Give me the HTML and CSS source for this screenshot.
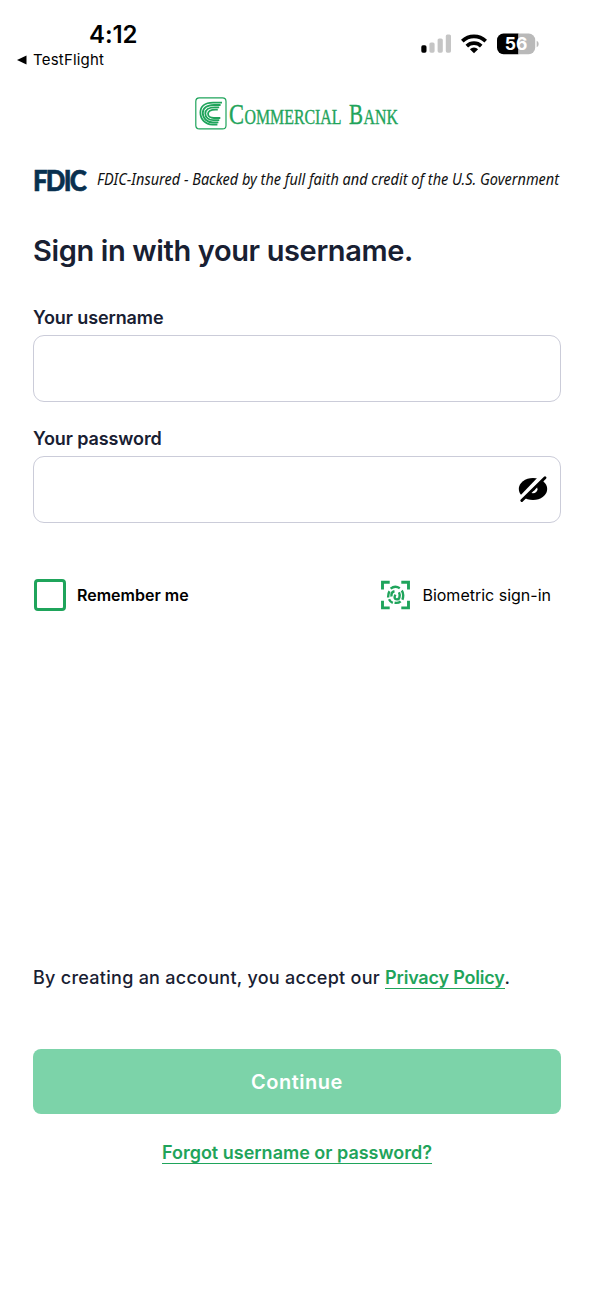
FILE: index.html
```html
<!DOCTYPE html>
<html lang="en">
<head>
  <meta charset="UTF-8" />
  <meta name="viewport" content="width=device-width, initial-scale=1.0"/>
  <title>Commercial Bank - Sign in</title>
  <link rel="stylesheet" href="styles.css">
</head>
<body>

  <header class="status-bar">
    <div class="status-left">
      <div class="time">4:12</div>
      <div class="back-app">
        <svg width="10" height="10" viewBox="0 0 10 10"><path d="M0 5L9.5 .5v9z" fill="#000"/></svg>
        <span>TestFlight</span>
      </div>
    </div>
    <svg class="status-icons" width="120" height="22" viewBox="420 33 120 22">
      <!-- signal -->
      <rect x="421.3" y="45.3" width="5.2" height="7.4" rx="1.6" fill="#000"/>
      <g fill="#c5c5c5">
        <rect x="429.4" y="42.4" width="5.2" height="10.3" rx="1.6"/>
        <rect x="437.6" y="38.4" width="5.2" height="14.3" rx="1.6"/>
        <rect x="445.8" y="34.4" width="5.2" height="18.3" rx="1.6"/>
      </g>
      <!-- wifi -->
      <g fill="none" stroke="#000" stroke-width="3.7">
        <path d="M462.3 41.2a16.8 16.8 0 0 1 23.4 0"/>
        <path d="M466.8 46.1a10.4 10.4 0 0 1 14.4 0"/>
      </g>
      <path d="M469.9 49.2a5.9 5.9 0 0 1 8.2 0L474 53.3z" fill="#000"/>
      <!-- battery -->
      <path d="M503.5 33.6h15v20.6h-15a6.5 6.5 0 0 1-6.5-6.5v-7.6a6.5 6.5 0 0 1 6.5-6.5z" fill="#000"/>
      <path d="M518.5 33.6h10.2a6.5 6.5 0 0 1 6.5 6.5v7.6a6.5 6.5 0 0 1-6.5 6.5h-10.2z" fill="#b9b9b9"/>
      <path d="M536.7 40.8q2 .8 2 3.2t-2 3.2z" fill="#b9b9b9"/>
      <text class="battery-level" x="516" y="50.2" text-anchor="middle">56</text>
    </svg>
  </header>

  <main class="page">
    <div class="brand">
      <svg class="brand-mark" width="32" height="33" viewBox="0 0 32 33">
        <rect x=".8" y=".9" width="30.2" height="31" rx="3.5" fill="none" stroke="#1fa45b" stroke-width="1.2"/>
        <g fill="none" stroke="#1fa45b" stroke-width="1.8">
          <path d="M27 5.700H18C9.500 5.700 5.400 10 5.400 15.500c0 7 5 12 12 12h5"/>
          <path d="M25.600 8h-6.600C11.500 8 7.800 11.500 7.800 16c0 5.500 4.200 9.400 10 9.400h5.600"/>
          <path d="M24.200 10.300h-4.400c-6 0-9.500 2.700-9.500 6.200 0 4 3.500 6.700 8 6.700h6"/>
          <path d="M22.800 12.600h-2.500c-4.500 0-7.300 1.700-7.300 4.200 0 2.500 2.500 4.200 5.800 4.200h6.500"/>
        </g>
      </svg>
      <svg class="brand-name" width="171" height="32" viewBox="0 0 171 32">
        <text class="cap" x="1" y="26.200" textLength="15" lengthAdjust="spacingAndGlyphs">C</text>
        <text class="small" x="16.500" y="26.200" textLength="97" lengthAdjust="spacingAndGlyphs">OMMERCIAL</text>
        <text class="cap" x="121" y="26.200" textLength="14" lengthAdjust="spacingAndGlyphs">B</text>
        <text class="small" x="135.500" y="26.200" textLength="34.500" lengthAdjust="spacingAndGlyphs">ANK</text>
      </svg>
    </div>

    <svg class="fdic" width="528" height="30" viewBox="33 165 528 30">
      <text class="fdic-logo" x="33" y="190.800" textLength="52" lengthAdjust="spacingAndGlyphs">FDIC</text>
      <text class="fdic-text" x="97" y="185.200" textLength="462" lengthAdjust="spacingAndGlyphs">FDIC-Insured - Backed by the full faith and credit of the U.S. Government</text>
    </svg>

    <h1>Sign in with your username.</h1>

    <form class="sign-in">
      <div class="field">
        <label for="username">Your username</label>
        <input type="text" id="username">
      </div>
      <div class="field">
        <label for="password">Your password</label>
        <div class="password-box">
          <input type="password" id="password">
          <svg class="eye" width="32" height="28" viewBox="0 0 32 28">
            <ellipse cx="16" cy="14" rx="14.200" ry="11" fill="#000"/>
            <ellipse cx="16" cy="14.200" rx="4.500" ry="4" fill="#fff"/>
            <ellipse cx="14.800" cy="13" rx="3.600" ry="3" fill="#000"/>
            <path d="M2.500 25L26 .5" stroke="#fff" stroke-width="5"/>
            <path d="M4.800 25.500L28 2.700" stroke="#000" stroke-width="2.900" stroke-linecap="round"/>
          </svg>
        </div>
      </div>

      <div class="options">
        <label class="remember"><input type="checkbox"><span>Remember me</span></label>
        <div class="biometric">
          <svg width="30" height="30" viewBox="0 0 30 30" fill="none" stroke="#1fa45b" stroke-width="2.900">
            <path d="M2.500 9.500V2.300H9.700M21.300 2.300h7.200v7.200M28.500 20.700v7.200h-7.200M9.700 27.900H2.500v-7.200"/>
            <g stroke-width="2.400">
              <path d="M10.600 8.600a8 8 0 0 1 9.200-.3M21.800 10.500q1.400 2.100 1.400 4.800 0 2.600-.8 4.500M8.100 17.500q-.1-4 1.400-6.200M9 19.200q1.300 2.700 3.800 3.700M14.600 22.800q3.900.5 6-1.500"/>
              <path d="M11.500 16.500q-.6-4.700 3-5.300M19 12.200q1.100 2.300.4 5.200-.6 2.200-2.600 2-3.400-.2-1.500-4.800"/>
            </g>
          </svg>
          <span>Biometric sign-in</span>
        </div>
      </div>

      <p class="terms">By creating an account, you accept our <a href="#">Privacy Policy</a>.</p>

      <button class="continue" type="button">Continue</button>
      <div class="forgot"><a href="#">Forgot username or password?</a></div>
    </form>
  </main>

</body>
</html>
```

FILE: styles.css
```css
* {
  box-sizing: border-box;
}

body {
  margin: 0;
  background-color: #fff;
  color: #182032;
  font-family: Inter, "Liberation Sans", sans-serif;
}

svg {
  display: block;
  flex-shrink: 0;
  overflow: visible;
}

/* Status bar */
.status-bar {
  display: flex;
  justify-content: space-between;
  height: 80px;
  padding: 21px 54px 0 17px;
  color: #000;
}

.time {
  padding-left: 72px;
  font-size: 24px;
  font-weight: 600;
  line-height: 28px;
  letter-spacing: -0.1px;
}

.back-app {
  display: flex;
  align-items: center;
  gap: 6px;
  font-size: 15px;
  line-height: 22px;
  letter-spacing: 0.2px;
}

.status-icons {
  margin-top: 12px;
}

.battery-level {
  fill: #fff;
  font-size: 17.5px;
  font-weight: 700;
}

/* Page */
.page {
  padding: 0 33px;
}

.brand {
  display: flex;
  justify-content: center;
  align-items: center;
  gap: 1px;
  margin-top: 17px;
  height: 33px;
}

.brand-name {
  fill: #1fa45b;
  stroke: #1fa45b;
  stroke-width: 0.4px;
  font-family: "Liberation Serif", serif;
}

.brand-name .cap {
  font-size: 30px;
}

.brand-name .small {
  font-size: 22px;
}

.fdic {
  margin-top: 35px;
}

.fdic-logo {
  fill: #08304f;
  stroke: #08304f;
  stroke-width: 0.6px;
  font-family: Lato, sans-serif;
  font-size: 29px;
  font-weight: 900;
  letter-spacing: -2px;
}

.fdic-text {
  fill: #111;
  font-family: "Noto Sans", sans-serif;
  font-size: 15.5px;
  font-style: italic;
}

h1 {
  margin: 36px 0 0;
  font-size: 29px;
  font-weight: 600;
  line-height: 40px;
  letter-spacing: -0.37px;
}

/* Form */
.field {
  display: flex;
  flex-direction: column;
  margin-bottom: 26px;
}

.sign-in {
  padding-top: 36px;
}

.field label {
  margin-bottom: 6px;
  font-size: 18px;
  font-weight: 600;
  line-height: 22px;
  letter-spacing: -0.1px;
}

.field input {
  display: block;
  width: 100%;
  height: 67px;
  padding: 0 16px;
  border: 1px solid #cbccd9;
  border-radius: 11px;
  background-color: #fff;
  font: inherit;
}

.field + .field {
  margin-bottom: 0;
}

.password-box {
  position: relative;
}

.eye {
  position: absolute;
  top: 19px;
  right: 12px;
}

.options {
  display: flex;
  justify-content: space-between;
  align-items: center;
  height: 33px;
  margin-top: 55px;
  padding: 0 10px 0 1px;
  color: #000;
}

.remember {
  display: flex;
  align-items: center;
  gap: 11px;
  font-size: 16px;
  font-weight: 600;
}

.remember input {
  appearance: none;
  width: 32px;
  height: 32px;
  margin: 0;
  border: 3px solid #1fa45b;
  border-radius: 4px;
}

.biometric {
  display: flex;
  align-items: center;
  gap: 12px;
  font-size: 16px;
}

a {
  border-bottom: 1px solid #1fa45b;
  color: #1fa45b;
  font-weight: 600;
  text-decoration: none;
}

.terms {
  margin: 355px 0 0;
  font-size: 18px;
  font-weight: 500;
  line-height: 24px;
  letter-spacing: 0.27px;
  white-space: nowrap;
}

.terms a {
  letter-spacing: -0.2px;
}

.continue {
  display: block;
  width: 100%;
  height: 65px;
  margin-top: 59px;
  border: none;
  border-radius: 8px;
  background-color: #7cd3a9;
  color: #fff;
  font-family: inherit;
  font-size: 20px;
  font-weight: 600;
  letter-spacing: 0.5px;
}

.forgot {
  margin-top: 27px;
  font-size: 18px;
  line-height: 24px;
  text-align: center;
}
```
